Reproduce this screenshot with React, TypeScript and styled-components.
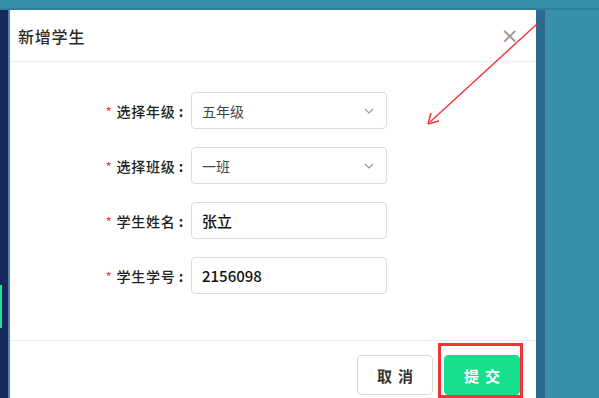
import React from 'react';
import styled, { createGlobalStyle } from 'styled-components';

const GlobalStyle = createGlobalStyle`
  html, body {
    margin: 0;
    padding: 0;
    overflow: hidden;
  }
  body {
    font-family: "Noto Sans CJK SC", "Noto Sans", sans-serif;
  }
`;

const Page = styled.div`
  position: relative;
  width: 599px;
  height: 398px;
  overflow: hidden;
  background: #3791aa;
  display: flex;
  flex-direction: column;
`;

const TopBand = styled.div`
  height: 8px;
  flex-shrink: 0;
  background: #3791aa;
  border-bottom: 2px solid #2f7f9c;
`;

const Main = styled.div`
  flex: 1;
  display: flex;
  min-height: 0;
`;

const SideStrip = styled.div`
  width: 8px;
  flex-shrink: 0;
  background: #15295a;
  border-right: 2px solid #5a7cbc;
  display: flex;
  flex-direction: column;
  padding-top: 275px;
`;

const SideMark = styled.div`
  width: 2px;
  height: 43px;
  background: #1de39a;
`;

const Dialog = styled.div`
  width: 526px;
  flex-shrink: 0;
  background: #fff;
  display: flex;
  flex-direction: column;
`;

const RightStrip = styled.div`
  width: 9px;
  flex-shrink: 0;
  background: #2b6a92;
`;

const Header = styled.div`
  height: 52px;
  flex-shrink: 0;
  display: flex;
  align-items: center;
  justify-content: space-between;
  padding: 0 17px 0 8px;
  border-bottom: 1px solid #ececec;
  box-sizing: border-box;
`;

const Title = styled.div`
  font-size: 16px;
  font-weight: 500;
  color: #2a2a2a;
  letter-spacing: 0.8px;
`;

const Close = styled.span`
  font-size: 22px;
  line-height: 1;
  color: #999;
  font-family: "DejaVu Sans", sans-serif;
`;

const Body = styled.div`
  padding: 30px 0 46px 87px;
  display: flex;
  flex-direction: column;
  gap: 18px;
  border-bottom: 1px solid #ececec;
`;

const Row = styled.div`
  display: flex;
  align-items: center;
`;

const Label = styled.label`
  width: 87px;
  margin-right: 7px;
  display: flex;
  justify-content: flex-end;
  align-items: center;
  font-size: 14px;
  font-weight: 500;
  color: #222;
  letter-spacing: 0.8px;
  white-space: nowrap;
`;

const Star = styled.span`
  color: #f03a3a;
  font-size: 12px;
  margin-right: 4px;
`;

const Colon = styled.span`
  margin-left: 3px;
  font-weight: 700;
`;

const Field = styled.div<{ $strong?: boolean }>`
  width: 196px;
  height: 37px;
  box-sizing: border-box;
  border: 1px solid #dcdcdc;
  border-radius: 4px;
  display: flex;
  align-items: center;
  justify-content: space-between;
  padding: 0 12px 0 10px;
  font-size: ${p => (p.$strong ? '15px' : '14px')};
  color: ${p => (p.$strong ? '#111' : '#444')};
  font-weight: ${p => (p.$strong ? 500 : 400)};
`;

const Footer = styled.div`
  display: flex;
  justify-content: flex-end;
  gap: 11px;
  padding: 14px 16px 0 0;
`;

const Button = styled.button<{ $primary?: boolean }>`
  width: 76px;
  height: 40px;
  border-radius: 4px;
  border: 1px solid ${p => (p.$primary ? '#16df8c' : '#d9d9d9')};
  background: ${p => (p.$primary ? '#16df8c' : '#fff')};
  color: ${p => (p.$primary ? '#fff' : '#333')};
  font-family: "Noto Sans CJK SC", sans-serif;
  font-size: 15px;
  font-weight: 700;
  letter-spacing: 6px;
  padding: 0 0 0 6px;
`;

const Overlay = styled.svg`
  position: absolute;
  left: 0;
  top: 0;
  pointer-events: none;
`;

const Chevron = () => (
  <svg width="10" height="6" viewBox="0 0 10 6">
    <path d="M1 1l4 4 4-4" fill="none" stroke="#9a9a9a" strokeWidth="1.2" />
  </svg>
);

const rows = [
  { label: '选择年级', value: '五年级', select: true },
  { label: '选择班级', value: '一班', select: true },
  { label: '学生姓名', value: '张立', select: false },
  { label: '学生学号', value: '2156098', select: false },
];

export default function App() {
  return (
    <>
      <GlobalStyle />
      <Page>
        <TopBand />
        <Main>
          <SideStrip>
            <SideMark />
          </SideStrip>
          <Dialog>
            <Header>
              <Title>新增学生</Title>
              <Close>×</Close>
            </Header>
            <Body>
              {rows.map(r => (
                <Row key={r.label}>
                  <Label>
                    <Star>*</Star>
                    {r.label}
                    <Colon>:</Colon>
                  </Label>
                  <Field $strong={!r.select}>
                    <span>{r.value}</span>
                    {r.select && <Chevron />}
                  </Field>
                </Row>
              ))}
            </Body>
            <Footer>
              <Button>取消</Button>
              <Button $primary>提交</Button>
            </Footer>
          </Dialog>
          <RightStrip />
        </Main>
        <Overlay width="599" height="398" viewBox="0 0 599 398">
          <line x1="537" y1="24" x2="430" y2="122" stroke="#f2383c" strokeWidth="1.4" />
          <path d="M428 124l3-11M428 124l11-3" stroke="#f2383c" strokeWidth="1.6" fill="none" />
          <rect x="439.5" y="344.5" width="82" height="52" fill="none" stroke="#f2343a" strokeWidth="3" />
        </Overlay>
      </Page>
    </>
  );
}
